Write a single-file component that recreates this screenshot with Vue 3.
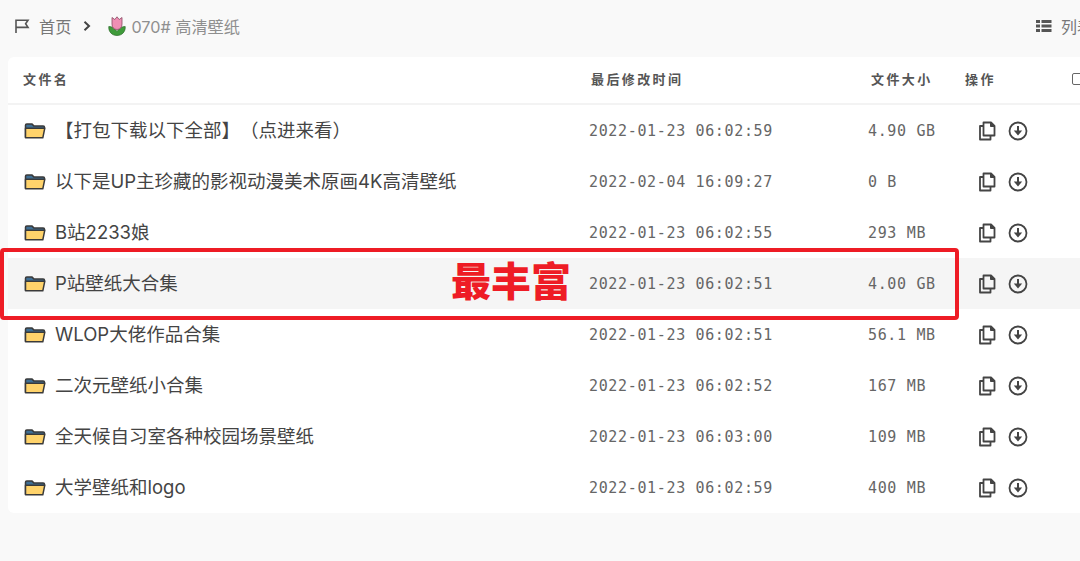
<template>
  <div class="page">
    <div class="toolbar">
      <div class="crumbs">
        <svg class="flag" viewBox="0 0 16 16" width="16" height="16" fill="none" stroke="#555" stroke-width="1.6">
          <path d="M2 15V2.200h12l-2.400 3.600 2.400 3.600H2" />
        </svg>
        <span class="home">首页</span>
        <svg class="chev" viewBox="0 0 10 12" width="10" height="12" fill="none" stroke="#444" stroke-width="2">
          <path d="M2.500 1.800 7 6l-4.500 4.200" />
        </svg>
        <svg class="tulip" viewBox="0 0 18 20" width="18" height="20">
          <path d="M.8 10.500c3 0 6 1.500 8.200 5 2.200-3.500 5.200-5 8.200-5 .5 5-3 9-8.200 9S.3 15.500.8 10.500z" fill="#3f9b3a" stroke="#2c6b2a" stroke-width=".7" />
          <path d="M9 13.500c-3.300 0-5-2.200-5-5.500V1.500L6.800 3.500 9 .8l2.200 2.700L14 1.500V8c0 3.300-1.700 5.500-5 5.500z" fill="#ef8fb4" stroke="#8a4a63" stroke-width=".8" />
        </svg>
        <span class="current">070# 高清壁纸</span>
      </div>
      <div class="view">
        <svg viewBox="0 0 16 14" width="16" height="14" fill="#555">
          <rect x="0" y="1" width="4" height="3" /><rect x="5.500" y="1" width="10" height="3" />
          <rect x="0" y="5.500" width="4" height="3" /><rect x="5.500" y="5.500" width="10" height="3" />
          <rect x="0" y="10" width="4" height="3" /><rect x="5.500" y="10" width="10" height="3" />
        </svg>
        <span>列表</span>
      </div>
    </div>

    <div class="panel">
      <div class="row head">
        <span>文件名</span>
        <span>最后修改时间</span>
        <span>文件大小</span>
        <span>操作</span>
        <span class="check"></span>
      </div>
      <div v-for="f in files" :key="f.name" class="row item" :class="{ hot: f.hot }">
        <div class="name">
          <svg class="folder" viewBox="0 0 22 18" width="22" height="18">
            <path d="M1.500 15.500V3.200c0-.8.500-1.300 1.300-1.300h5l2 2h9.400c.8 0 1.300.5 1.300 1.300v1" fill="#3f6f95" stroke="#3a3a3a" stroke-width="1.500" stroke-linejoin="round" />
            <path d="M1.500 15.800V6.200h19.300l-2 9.600z" fill="#ffd36b" stroke="#3a3a3a" stroke-width="1.500" stroke-linejoin="round" />
          </svg>
          <span>{{ f.name }}</span>
        </div>
        <span class="time">{{ f.time }}</span>
        <span class="size">{{ f.size }}</span>
        <div class="actions">
          <svg viewBox="0 0 20 20" width="20" height="20" fill="none" stroke="#444" stroke-width="1.800" stroke-linejoin="round">
            <path d="M6.500 1.500h7.500l3.500 3.500v9.500h-11z" />
            <path d="M6.500 5H3v13.500h10.500v-4" />
            <path d="M13.500 1.500v4h4" fill="#444" stroke-width="1" />
          </svg>
          <svg viewBox="0 0 20 20" width="20" height="20" fill="none" stroke="#444" stroke-width="1.800">
            <circle cx="10" cy="10" r="8.500" />
            <path d="M10 5v5" stroke-width="2" />
            <path d="M5.800 9.600h8.400L10 14.600z" fill="#444" stroke="none" />
          </svg>
        </div>
      </div>
    </div>

    <div class="frame">
      <span class="stamp">最丰富</span>
    </div>
  </div>
</template>

<script setup>
const files = [
  { name: '【打包下载以下全部】（点进来看）', time: '2022-01-23 06:02:59', size: '4.90 GB' },
  { name: '以下是UP主珍藏的影视动漫美术原画4K高清壁纸', time: '2022-02-04 16:09:27', size: '0 B' },
  { name: 'B站2233娘', time: '2022-01-23 06:02:55', size: '293 MB' },
  { name: 'P站壁纸大合集', time: '2022-01-23 06:02:51', size: '4.00 GB', hot: true },
  { name: 'WLOP大佬作品合集', time: '2022-01-23 06:02:51', size: '56.1 MB' },
  { name: '二次元壁纸小合集', time: '2022-01-23 06:02:52', size: '167 MB' },
  { name: '全天候自习室各种校园场景壁纸', time: '2022-01-23 06:03:00', size: '109 MB' },
  { name: '大学壁纸和logo', time: '2022-01-23 06:02:59', size: '400 MB' },
]
</script>

<style>
html,
body {
  margin: 0;
  height: 561px;
  overflow: hidden;
  background: #f9f9f9;
}
</style>

<style scoped>
.page {
  position: relative;
  width: 1093px;
  height: 561px;
  background: #f9f9f9;
  font-family: "Inter", "Noto Sans CJK SC", sans-serif;
  color: #333;
}

.toolbar {
  height: 57px;
  display: flex;
  align-items: center;
  justify-content: space-between;
  padding: 0 0 5px 14px;
  box-sizing: border-box;
}

.crumbs {
  display: flex;
  align-items: center;
  font-size: 16.2px;
  color: #777;
}

.home {
  margin-left: 9px;
}

.chev {
  margin: 0 16px 0 11px;
}

.current {
  margin-left: 5px;
  color: #8f8f8f;
}

.view {
  display: flex;
  align-items: center;
  gap: 9px;
  font-size: 16px;
  color: #777;
}

.panel {
  margin-left: 8px;
  background: #fff;
  border-radius: 6px 0 0 6px;
}

.row {
  display: grid;
  grid-template-columns: 581px 279px 97px 1fr;
  align-items: center;
}

.head {
  grid-template-columns: 568px 280px 94px 107px 1fr;
  height: 48px;
  padding-left: 15px;
  padding-bottom: 3px;
  border-bottom: 2px solid #f3f3f3;
  box-sizing: border-box;
  font-size: 13px;
  font-weight: 700;
  letter-spacing: 2.4px;
  color: #555;
}

.check {
  width: 9px;
  height: 10px;
  border: 1px solid #666;
  border-radius: 2px;
}

.item {
  height: 51px;
}

.item.hot {
  background: #f5f5f5;
}

.name {
  display: flex;
  align-items: center;
  gap: 10px;
  padding-left: 16px;
  font-size: 18.5px;
  color: #444;
  text-spacing-trim: space-all;
}

.name span {
  margin-top: -3px;
  margin-left: -1px;
}

.time,
.size {
  font-family: "DejaVu Sans Mono", monospace;
  font-size: 15px;
  letter-spacing: 0.65px;
  color: #666;
}

.actions {
  display: flex;
  gap: 11px;
  padding-left: 12px;
}

.frame {
  position: absolute;
  left: 0;
  top: 248px;
  width: 959px;
  height: 72px;
  border: 4px solid #ee1c25;
  border-radius: 4px;
  box-sizing: border-box;
}

.stamp {
  position: absolute;
  left: 447px;
  top: 5px;
  font-size: 40px;
  line-height: 50px;
  font-weight: 900;
  color: #ee1c25;
}
</style>
